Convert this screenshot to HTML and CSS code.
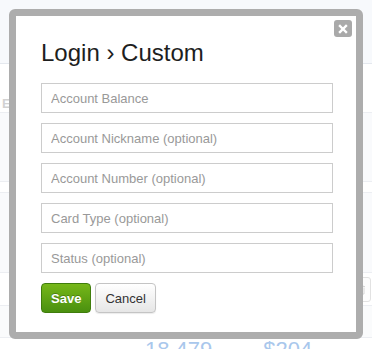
FILE: index.html
```html
<!DOCTYPE html>
<html>
<head>
<meta charset="utf-8">
<link rel="stylesheet" href="styles.css">
</head>
<body>
<div class="page">
  <div class="topbar"></div>
  <div class="row row-a"><span class="faint">Ex</span></div>
  <div class="row row-b"></div>
  <div class="row row-c"></div>
  <div class="row row-d"></div>
  <div class="row row-e">
    <span class="trash-btn">
      <svg width="9" height="11" viewBox="0 0 9 11"><path d="M1 2.5h7M3 2.5V1.5h3v1M2 3.5v6.5h5V3.5" fill="none" stroke="#d6d6d6" stroke-width="1"/></svg>
    </span>
  </div>
  <div class="row row-f"></div>
  <div class="stats"><span>18,479</span><span>$204</span></div>
</div>

<div class="modal">
  <div class="modal-body">
    <button class="close" aria-label="Close">
      <svg width="10" height="10" viewBox="0 0 10 10"><path d="M2 2L8 8M8 2L2 8" stroke="#fff" stroke-width="2.4" stroke-linecap="square"/></svg>
    </button>
    <h1 class="title">Login › Custom</h1>
    <form class="fields">
      <input class="field" type="text" placeholder="Account Balance">
      <input class="field" type="text" placeholder="Account Nickname (optional)">
      <input class="field" type="text" placeholder="Account Number (optional)">
      <input class="field" type="text" placeholder="Card Type (optional)">
      <input class="field" type="text" placeholder="Status (optional)">
      <div class="actions">
        <button type="button" class="btn btn-save">Save</button>
        <button type="button" class="btn btn-cancel">Cancel</button>
      </div>
    </form>
  </div>
</div>
</body>
</html>
```

FILE: styles.css
```css
* { box-sizing: border-box; }
html, body { margin: 0; padding: 0; }
body {
  width: 372px;
  height: 349px;
  overflow: hidden;
  background: #fff;
  font-family: "Liberation Sans", Arial, sans-serif;
  position: relative;
}

.page { display: flex; flex-direction: column; }
.topbar { height: 64px; background: #f7f9fc; border-bottom: 1px solid #e4e8ee; }
.row { border-bottom: 1px solid #eceef2; position: relative; }
.row-a { height: 49px; background: #fff; display: flex; align-items: flex-end; padding: 0 0 1px 2px; }
.faint { color: #d2d2d2; font-size: 13px; font-weight: bold; line-height: 14px; }
.row-b { height: 69px; background: #f9fafc; }
.row-c { height: 11px; background: #fff; }
.row-d { height: 80px; background: #f9fafc; }
.row-e { height: 33px; background: #fff; display: flex; justify-content: flex-end; align-items: center; padding-right: 1px; }
.trash-btn {
  width: 26px; height: 25px;
  border: 1px solid #e2e2e2; border-radius: 3px;
  display: flex; align-items: center; justify-content: flex-end; padding-right: 4px;
  background: #fdfdfd;
}
.row-f { height: 32px; background: #fafbfc; }
.stats {
  display: flex; gap: 51px; padding-left: 145px;
  font-size: 22px; line-height: 22px; color: #a9c7ec;
  margin-top: 1px;
}

.modal {
  position: absolute;
  left: 9px; top: 9px;
  width: 354px;
  border: 7px solid #adadad;
  border-radius: 6px;
  background: #adadad;
}
.modal-body {
  position: relative;
  background: #fff;
  padding: 22px 23px 19px 25px;
}
.close {
  position: absolute;
  top: 4px; right: 4px;
  width: 18px; height: 17px;
  border: 0; padding: 0;
  border-radius: 3px;
  background: #a9a9a9;
  display: flex; align-items: center; justify-content: center;
}
.title {
  margin: 0 0 15px 0;
  font-size: 24px;
  line-height: 30px;
  font-weight: normal;
  color: #1e1e1e;
}
.fields { display: flex; flex-direction: column; gap: 10px; margin: 0; }
.field {
  width: 292px; height: 30px;
  border: 1px solid #ccc;
  padding: 0 9px;
  font-family: inherit; font-size: 13px;
  color: #333;
  background: #fff;
  outline: none;
  border-radius: 0;
}
.field::placeholder { color: #999; }
.actions { display: flex; gap: 4px; }
.btn {
  height: 30px;
  padding: 0 9px;
  font-family: inherit; font-size: 13px;
  border-radius: 4px;
}
.btn-save {
  color: #fff; font-weight: bold;
  background: linear-gradient(#76b719, #4a900f);
  border: 1px solid #3f7d0c;
  text-shadow: 0 -1px 0 rgba(0,0,0,0.25);
}
.btn-cancel {
  color: #333;
  background: linear-gradient(#ffffff, #e6e6e6);
  border: 1px solid #c4c4c4;
  box-shadow: 0 1px 1px rgba(0,0,0,0.08);
}
```
